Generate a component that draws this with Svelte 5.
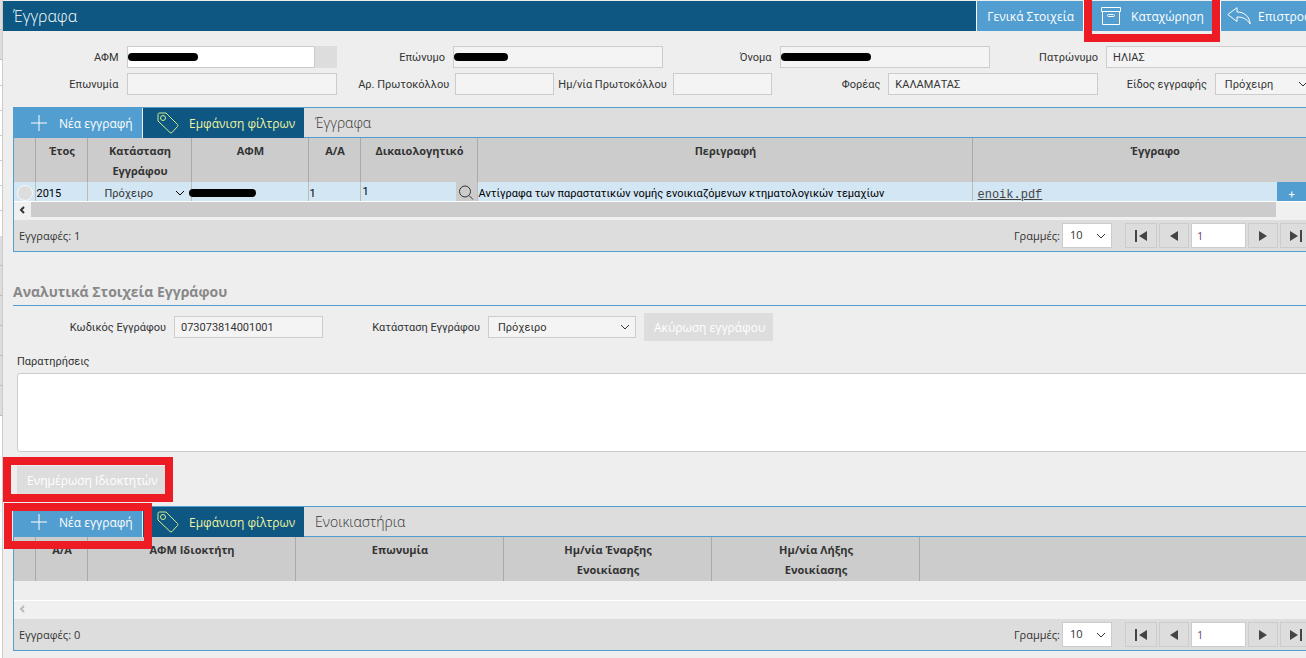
<script lang="ts">
  const documentColumns = [
    { label: 'Έτος', width: 52 },
    { label: 'Κατάσταση Εγγράφου', width: 104 },
    { label: 'ΑΦΜ', width: 117 },
    { label: 'Α/Α', width: 52 },
    { label: 'Δικαιολογητικό', width: 117 },
    { label: 'Περιγραφή', width: 495 },
    { label: 'Έγγραφο', width: 364 },
  ];

  const leaseColumns = [
    { label: 'Α/Α', width: 52 },
    { label: 'ΑΦΜ Ιδιοκτήτη', width: 208 },
    { label: 'Επωνυμία', width: 208 },
    { label: 'Ημ/νία Έναρξης Ενοικίασης', width: 208 },
    { label: 'Ημ/νία Λήξης Ενοικίασης', width: 208 },
    { label: '', width: 417 },
  ];

  let notes = $state('');
</script>

{#snippet chevron()}
  <svg class="chevron" width="10" height="6" viewBox="0 0 10 6" aria-hidden="true">
    <path d="M1 1l4 4 4-4" />
  </svg>
{/snippet}

{#snippet toolbar(title: string, marked: boolean)}
  <div class="toolbar">
    <div class="mark-anchor">
      <button class="btn btn-new">
        <svg width="16" height="16" viewBox="0 0 16 16" aria-hidden="true">
          <path d="M8 0v16M0 8h16" />
        </svg>
        Νέα εγγραφή
      </button>
      {#if marked}<span class="mark mark-new"></span>{/if}
    </div>
    <button class="btn btn-filter">
      <svg width="22" height="22" viewBox="0 0 22 22" aria-hidden="true">
        <path d="M1 2.500Q1 1 2.500 1H9L20.500 12.500Q21.500 13.500 20.500 14.500L15 20.500Q14 21.500 13 20.500L1 9z" />
        <circle cx="6" cy="6" r="2.500" />
      </svg>
      Εμφάνιση φίλτρων
    </button>
    <h2>{title}</h2>
  </div>
{/snippet}

{#snippet head(columns: { label: string; width: number }[])}
  <colgroup>
    <col class="pick-col" />
    {#each columns as column}
      <col style="width: {column.width}px" />
    {/each}
  </colgroup>
  <thead>
    <tr>
      <th></th>
      {#each columns as column}
        <th class:narrow={column.width < 60}>{column.label}</th>
      {/each}
    </tr>
  </thead>
{/snippet}

{#snippet pager(count: number)}
  <div class="pager">
    <span class="count">Εγγραφές: {count}</span>
    <label class="rows">
      Γραμμές:
      <span class="select">
        <select><option>10</option></select>
        {@render chevron()}
      </span>
    </label>
    <button class="edge" aria-label="Πρώτη σελίδα">
      <svg width="12" height="12" viewBox="0 0 12 12"><path d="M0 0h2v12H0zM12 1v10L4 6z" /></svg>
    </button>
    <button aria-label="Προηγούμενη σελίδα">
      <svg width="8" height="10" viewBox="0 0 8 10"><path d="M8 0v10L0 5z" /></svg>
    </button>
    <input type="text" value="1" aria-label="Σελίδα" />
    <button aria-label="Επόμενη σελίδα">
      <svg width="8" height="10" viewBox="0 0 8 10"><path d="M0 0v10l8-5z" /></svg>
    </button>
    <button class="edge" aria-label="Τελευταία σελίδα">
      <svg width="12" height="12" viewBox="0 0 12 12"><path d="M10 0h2v12h-2zM0 1v10l8-5z" /></svg>
    </button>
  </div>
{/snippet}

<div class="shell">
  <div class="rail"></div>
  <main>
    <header>
      <h1>Έγγραφα</h1>
      <button class="btn">Γενικά Στοιχεία</button>
      <div class="mark-anchor">
        <button class="btn btn-save">
          <svg width="20" height="18" viewBox="0 0 20 18" aria-hidden="true">
            <path d="M.5.5h19v4H.5zM1.500 4.500v13h17v-13M7.500 7.500h5q1 0 1 1t-1 1h-5q-1 0-1-1t1-1z" />
          </svg>
          Καταχώρηση
        </button>
        <span class="mark mark-save"></span>
      </div>
      <button class="btn btn-back">
        <svg width="24" height="18" viewBox="0 0 24 18" aria-hidden="true">
          <path d="M10 .7L.8 7.500l9.200 7v-4.500c6 0 10 2 13.200 7C22.500 9.500 17.500 5 10 5z" />
        </svg>
        Επιστροφή
      </button>
    </header>

    <form class="person">
      <div class="line">
        <div class="field">
          <label for="afm">ΑΦΜ</label>
          <span class="box lookup">
            <input id="afm" type="text" />
            <span class="redaction wide"></span>
          </span>
        </div>
        <div class="field">
          <label for="surname">Επώνυμο</label>
          <span class="box">
            <input id="surname" type="text" readonly />
            <span class="redaction"></span>
          </span>
        </div>
        <div class="field">
          <label for="name">Όνομα</label>
          <span class="box">
            <input id="name" type="text" readonly />
            <span class="redaction widest"></span>
          </span>
        </div>
        <div class="field">
          <label for="father">Πατρώνυμο</label>
          <span class="box"><input id="father" type="text" value="ΗΛΙΑΣ" readonly /></span>
        </div>
      </div>
      <div class="line">
        <div class="field">
          <label for="company">Επωνυμία</label>
          <span class="box"><input id="company" type="text" readonly /></span>
        </div>
        <div class="field short">
          <label for="protocol">Αρ. Πρωτοκόλλου</label>
          <span class="box"><input id="protocol" type="text" readonly /></span>
        </div>
        <div class="field short">
          <label for="protocol-date">Ημ/νία Πρωτοκόλλου</label>
          <span class="box"><input id="protocol-date" type="text" readonly /></span>
        </div>
        <div class="field">
          <label for="agency">Φορέας</label>
          <span class="box"><input id="agency" type="text" value="ΚΑΛΑΜΑΤΑΣ" readonly /></span>
        </div>
        <div class="field">
          <label for="kind">Είδος εγγραφής</label>
          <span class="select kind">
            <select id="kind"><option>Πρόχειρη</option></select>
            {@render chevron()}
          </span>
        </div>
      </div>
    </form>

    <section class="panel">
      {@render toolbar('Έγγραφα', false)}
      <div class="viewport">
        <table>
          {@render head(documentColumns)}
          <tbody>
            <tr>
              <td class="pick"><input type="radio" name="row" aria-label="Επιλογή εγγραφής" /></td>
              <td>2015</td>
              <td>
                <span class="select cell-select">
                  <select aria-label="Κατάσταση"><option>Πρόχειρο</option></select>
                  {@render chevron()}
                </span>
              </td>
              <td class="hidden-afm"><span class="redaction cell"></span></td>
              <td>1</td>
              <td>
                <div class="proof">
                  <input type="text" value="1" aria-label="Δικαιολογητικό" />
                  <button aria-label="Αναζήτηση">
                    <svg width="16" height="16" viewBox="0 0 16 16">
                      <circle cx="7" cy="6.500" r="5.500" />
                      <path d="M11 10.500l4 4" />
                    </svg>
                  </button>
                </div>
              </td>
              <td>Αντίγραφα των παραστατικών νομής ενοικιαζόμενων κτηματολογικών τεμαχίων</td>
              <td>
                <div class="file">
                  <a href="#enoik">enoik.pdf</a>
                  <button aria-label="Προσθήκη">+</button>
                </div>
              </td>
            </tr>
          </tbody>
        </table>
      </div>
      <div class="scroll">
        <svg width="6" height="8" viewBox="0 0 6 8"><path d="M5 1L2 4l3 3" /></svg>
        <span class="thumb"></span>
      </div>
      {@render pager(1)}
    </section>

    <h3>Αναλυτικά Στοιχεία Εγγράφου</h3>

    <form class="details">
      <div class="line">
        <label class="line-label" for="code">Κωδικός Εγγράφου</label>
        <span class="box code"><input id="code" type="text" value="073073814001001" readonly /></span>
        <label class="line-label" for="state">Κατάσταση Εγγράφου</label>
        <span class="select state">
          <select id="state"><option>Πρόχειρο</option></select>
          {@render chevron()}
        </span>
        <button class="btn" type="button" disabled>Ακύρωση εγγράφου</button>
      </div>
      <label class="notes-label" for="notes">Παρατηρήσεις</label>
      <textarea id="notes" bind:value={notes}></textarea>
      <div class="mark-anchor owners">
        <button class="btn" type="button" disabled>Ενημέρωση Ιδιοκτητών</button>
        <span class="mark mark-owners"></span>
      </div>
    </form>

    <section class="panel">
      {@render toolbar('Ενοικιαστήρια', true)}
      <div class="viewport">
        <table class="leases">
          {@render head(leaseColumns)}
        </table>
      </div>
      <div class="scroll idle">
        <svg width="6" height="8" viewBox="0 0 6 8"><path d="M5 1L2 4l3 3" /></svg>
      </div>
      {@render pager(0)}
    </section>
  </main>
</div>

<style>
  :global(body) {
    overflow-x: hidden;
    background: #eee;
  }

  .shell {
    display: flex;
    min-height: 100vh;
    overflow: hidden;
    color: #333;
    font-family: Roboto, 'Open Sans', sans-serif;
    font-size: 11px;
  }

  .shell * {
    box-sizing: border-box;
  }

  /* Edge of the list that lies behind the form */
  .rail {
    flex: 0 0 3px;
    border-right: 1px solid #ccc;
    background:
      repeating-linear-gradient(#ddd 0 29px, #bbb 29px 30px) 0 0 / 100% 60px no-repeat,
      repeating-linear-gradient(#fff 0 24px, #ccc 24px 25px) 0 61px / 100% 174px no-repeat,
      repeating-linear-gradient(#ddd 0 29px, #bbb 29px 30px) 0 236px / 100% 180px no-repeat,
      #fff;
  }

  /* The form is a little wider than the window and is cut on the right */
  main {
    flex: 0 0 calc(100% + 12px);
    min-width: 0;
    padding-top: 1px;
    background: #eee;
  }

  input,
  select,
  button,
  textarea {
    margin: 0;
    border: 1px solid #ccc;
    border-radius: 0;
    color: #333;
    font: inherit;
  }

  svg {
    flex: none;
    fill: none;
    stroke: currentColor;
  }

  header {
    display: flex;
    gap: 1px;
    height: 30px;
    background: #0d5782;
  }

  h1,
  h2,
  h3,
  th,
  .btn,
  .pager {
    font-family: 'Open Sans', 'Noto Sans', sans-serif;
  }

  h1 {
    flex: 1;
    margin: 0;
    padding-left: 10px;
    color: #fff;
    font-size: 16px;
    font-weight: 300;
    line-height: 30px;
  }

  .btn {
    display: flex;
    align-items: center;
    gap: 10px;
    height: 30px;
    padding: 0 9px 0 10px;
    border: 0;
    background: #529ed0;
    color: #fff;
    font-size: 12px;
    white-space: nowrap;
  }

  header .btn {
    box-shadow: -1px 0 #fff;
  }

  .btn:disabled {
    height: 28px;
    padding-right: 8px;
    background: #ddd;
    color: #fff;
  }

  .btn-save {
    width: 136px;
    padding: 0 17px;
  }

  header .btn-back {
    gap: 7px;
    padding: 0 1px 0 6px;
  }

  .mark-anchor {
    position: relative;
  }

  .mark {
    position: absolute;
    z-index: 1;
    border: 8px solid #ed1c24;
    pointer-events: none;
  }

  .mark-save {
    inset: -9px 0 -11px;
  }

  .mark-new {
    inset: -4px -9px -13px -10px;
  }

  .mark-owners {
    inset: -9px -7px -8px -14px;
  }

  .person {
    display: flex;
    flex-direction: column;
    gap: 5px;
    padding: 15px 5px 12px 7px;
  }

  .line {
    display: flex;
    align-items: center;
  }

  .field {
    display: flex;
    flex: 0 0 25%;
    align-items: center;
    justify-content: flex-end;
    gap: 8px;
  }

  .field.short {
    flex-basis: calc(100% / 6);
    gap: 6px;
  }

  .field label {
    white-space: nowrap;
  }

  .box {
    position: relative;
    display: flex;
    flex: none;
    width: 210px;
    height: 22px;
  }

  .short .box {
    width: 99px;
  }

  .box input {
    width: 100%;
    padding: 0 6px;
    background: #f4f4f4;
  }

  .lookup {
    padding-right: 22px;
    background: #ddd;
  }

  .lookup input {
    background: #fff;
  }

  .redaction {
    position: absolute;
    top: 7px;
    left: 1px;
    width: 54px;
    height: 8px;
    border-radius: 4px;
    background: #000;
  }

  .redaction.wide {
    width: 70px;
  }

  .redaction.widest {
    width: 90px;
  }

  .redaction.cell {
    left: -3px;
    width: 67px;
  }

  .select {
    position: relative;
    display: flex;
    flex: none;
    height: 22px;
  }

  .select select {
    width: 100%;
    padding: 0 9px;
    appearance: none;
    background: #f4f4f4;
  }

  .chevron {
    position: absolute;
    top: 50%;
    right: 6px;
    margin-top: -3px;
    pointer-events: none;
  }

  .kind {
    width: 210px;
  }

  .kind .chevron {
    right: 117px;
  }

  .panel {
    margin: 0 5px 0 10px;
    border: 1px solid #529ed0;
  }

  .toolbar {
    display: flex;
    height: 30px;
    border-bottom: 1px solid #529ed0;
    background: #ddd;
  }

  .toolbar .btn {
    height: 30px;
  }

  .btn-new {
    width: 129px;
    padding-left: 17px;
    border-right: 1px solid #eee;
  }

  .btn-new svg {
    margin-right: 2px;
  }

  .btn-filter {
    width: 161px;
    padding-left: 14px;
    background: #0d5782;
    color: #f0f3a0;
  }

  .btn-filter svg {
    color: #d2ec8c;
  }

  h2 {
    margin: 0 0 0 11px;
    font-size: 14px;
    font-weight: 300;
    line-height: 30px;
  }

  .viewport {
    height: 63px;
    overflow: hidden;
  }

  table {
    width: 1322px;
    border-collapse: collapse;
    table-layout: fixed;
  }

  .pick-col {
    width: 21px;
  }

  th {
    height: 44px;
    padding: 3px 7px 1px 9px;
    border-left: 1px solid #aaa;
    background: #ccc;
    font-weight: 700;
    line-height: 20px;
    vertical-align: top;
  }

  th:first-child {
    border-left: 0;
  }

  .leases th {
    padding: 3px 50px 1px 52px;
  }

  th.narrow,
  .leases th.narrow {
    padding: 3px 0 1px 2px;
  }

  td {
    height: 22px;
    padding: 0 0 0 1px;
    border-left: 1px solid #bbb;
    background: #d2e6f4;
    color: #000;
    white-space: nowrap;
  }

  td.pick {
    padding: 0;
    border-left: 0;
  }

  .pick input {
    display: block;
    width: 16px;
    height: 16px;
    margin: 0 3px;
    appearance: none;
    border: 1px solid #f8f8f8;
    border-radius: 50%;
    background: #ddd;
  }

  .hidden-afm {
    position: relative;
  }

  .cell-select select {
    padding: 0 16px;
    border: 0;
    background: transparent;
  }

  .proof {
    display: flex;
    height: 22px;
  }

  .proof input {
    flex: 1;
    min-width: 0;
    padding: 0 1px 4px;
    border: 0;
    background: transparent;
    color: #000;
  }

  .proof button {
    width: 21px;
    padding: 3px 2px;
    border: 0;
    background: #ccc;
  }

  .file {
    display: flex;
    align-items: center;
    height: 22px;
    padding-left: 4px;
  }

  .file a {
    width: 299px;
    padding-top: 4px;
    color: #444;
    font-family: 'Liberation Mono', monospace;
    font-size: 12px;
  }

  .file button {
    width: 30px;
    height: 22px;
    padding: 3px 0 0;
    border: 0;
    background: #529ed0;
    color: #fff;
  }

  .scroll {
    display: flex;
    align-items: center;
    height: 19px;
    padding: 0 39px 3px 5px;
    border-top: 1px solid #fff;
    background: #f0f0f0;
  }

  .scroll svg {
    stroke-width: 2;
  }

  .idle svg {
    color: #bbb;
  }

  .thumb {
    flex: 1;
    height: 15px;
    margin-left: 6px;
    background: #ccc;
  }

  .pager {
    display: flex;
    align-items: center;
    gap: 2px;
    height: 31px;
    padding: 0 3px 0 5px;
    background: #ddd;
  }

  .count {
    flex: 1;
  }

  .rows {
    display: flex;
    align-items: center;
    gap: 2px;
    margin-right: 11px;
  }

  .rows .select {
    width: 50px;
    height: 25px;
  }

  .rows select {
    padding: 0 7px 2px;
    background: #fff;
  }

  .pager button {
    display: flex;
    align-items: center;
    justify-content: center;
    width: 30px;
    height: 25px;
    padding: 0;
    background: #ddd;
  }

  .pager .edge {
    width: 32px;
  }

  .pager button svg {
    fill: #444;
    stroke: none;
  }

  .pager input {
    width: 55px;
    height: 25px;
    padding: 0 5px;
    background: #fff;
    color: #7a3f6e;
  }

  h3 {
    margin: 30px 5px 0 10px;
    padding-bottom: 4px;
    border-bottom: 1px solid #529ed0;
    color: #888;
    font-size: 14px;
    font-weight: 700;
    line-height: 19px;
  }

  .details {
    display: flex;
    flex-direction: column;
    padding: 7px 5px 12px 14px;
  }

  .details .line {
    gap: 8px;
  }

  .line-label,
  .code {
    width: 149px;
  }

  .line-label {
    text-align: right;
  }

  .state {
    width: 148px;
  }

  .notes-label {
    margin-top: 13px;
    line-height: 16px;
  }

  textarea {
    height: 79px;
    margin-top: 3px;
    border-radius: 3px;
    background: #fff;
  }

  .owners {
    align-self: flex-start;
    margin-top: 14px;
  }
</style>
